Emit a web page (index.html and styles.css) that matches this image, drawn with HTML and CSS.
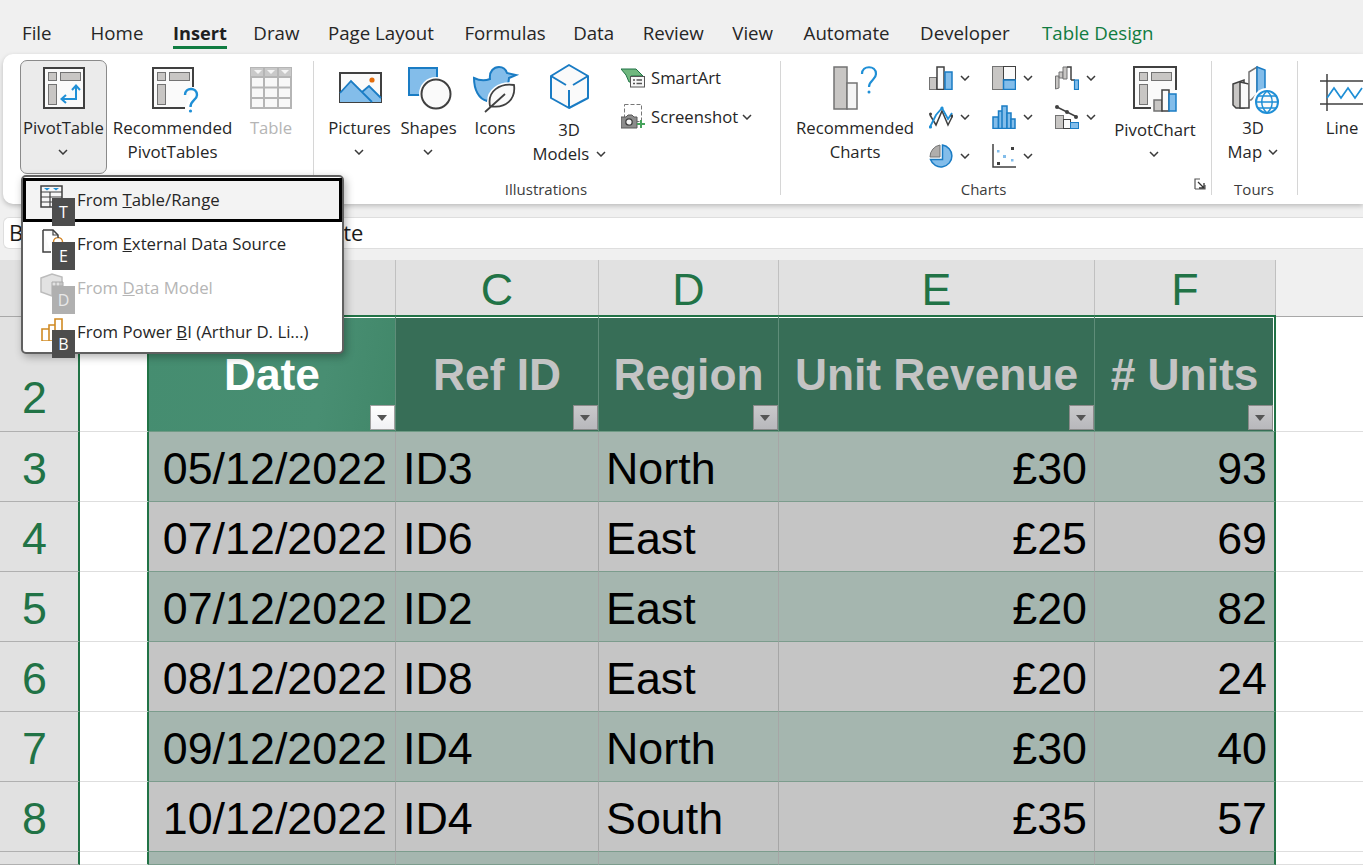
FILE: index.html
```html
<!DOCTYPE html>
<html lang="en">
<head>
<meta charset="utf-8">
<title>Excel Insert ribbon</title>
<link rel="stylesheet" href="styles.css">
</head>
<body>
<svg class="defs" width="0" height="0" aria-hidden="true">
  <symbol id="chev" viewBox="0 0 10 6"><polyline points="1,1 5,5 9,1" fill="none" stroke="#3a3a3a" stroke-width="1.500"/></symbol>
</svg>

<nav class="tabs">
  <span class="tab tab-file">File</span>
  <span class="tab">Home</span>
  <span class="tab tab-active">Insert</span>
  <span class="tab">Draw</span>
  <span class="tab">Page Layout</span>
  <span class="tab tab-formulas">Formulas</span>
  <span class="tab tab-data">Data</span>
  <span class="tab">Review</span>
  <span class="tab">View</span>
  <span class="tab tab-auto">Automate</span>
  <span class="tab tab-dev">Developer</span>
  <span class="tab tab-green">Table Design</span>
</nav>

<section class="ribbon">
  <div class="group g-tables">
    <div class="group-body">
      <div class="btn btn-pivot pressed">
        <svg class="ico" width="44" height="44" viewBox="0 0 44 44">
          <rect x="2" y="2" width="40" height="40" fill="#fafafa" stroke="#404040" stroke-width="2"/>
          <rect x="6.500" y="6.500" width="8" height="8" fill="#c8c6c4" stroke="#737373"/>
          <rect x="18.500" y="6.500" width="20" height="8" fill="#c8c6c4" stroke="#737373"/>
          <rect x="6.500" y="18.500" width="8" height="20" fill="#c8c6c4" stroke="#737373"/>
          <path d="M34 20 V33 H20 M30 24 L34 19.500 L38 24 M24 29 L19.500 33 L24 37" fill="none" stroke="#1f8fd6" stroke-width="2"/>
        </svg>
        <span class="lbl">PivotTable</span>
        <svg class="chev"><use href="#chev"/></svg>
      </div>
      <div class="btn btn-rec">
        <svg class="ico" width="48" height="48" viewBox="0 0 48 48">
          <path d="M36 42 H4 V2 H44 V21" fill="#fafafa" stroke="#404040" stroke-width="2"/>
          <rect x="8.500" y="6.500" width="8" height="8" fill="#c8c6c4" stroke="#737373"/>
          <rect x="20.500" y="6.500" width="20" height="8" fill="#c8c6c4" stroke="#737373"/>
          <rect x="8.500" y="18.500" width="8" height="20" fill="#c8c6c4" stroke="#737373"/>
          <path d="M36 29 C36 21 48 21 48 29 C48 34 41.500 34 41.500 41" fill="none" stroke="#1f8fd6" stroke-width="2.400"/>
          <circle cx="41.500" cy="45" r="1.600" fill="#1f8fd6"/>
        </svg>
        <span class="lbl">Recommended<br>PivotTables</span>
      </div>
      <div class="btn btn-table disabled">
        <svg class="ico" width="44" height="44" viewBox="0 0 44 44">
          <rect x="2" y="2" width="40" height="40" fill="#f8f8f8" stroke="#b5b5b5" stroke-width="2"/>
          <rect x="2" y="2" width="40" height="9" fill="#c9c9c9"/>
          <path d="M2 11 H42 M2 21.500 H42 M2 32 H42 M15 2 V42 M29 2 V42" stroke="#b5b5b5" stroke-width="2"/>
          <path d="M5 4 H13 L9 8 Z M18 4 H26 L22 8 Z M32 4 H40 L36 8 Z" fill="#f4f4f4"/>
        </svg>
        <span class="lbl">Table</span>
      </div>
    </div>
  </div>

  <div class="group g-illus">
    <div class="group-body">
      <div class="btn btn-pict">
        <svg class="ico" width="44" height="44" viewBox="0 0 44 44">
          <rect x="3" y="7" width="41" height="29" fill="#fafafa" stroke="#404040" stroke-width="2"/>
          <path d="M3 27 L14 15 L25 26 L32 20 L44 32 V36 H3 Z" fill="#83bdea"/>
          <path d="M3 27 L14 15 L35 36 M25 26 L32 20 L44 32" fill="none" stroke="#1a7cc4" stroke-width="1.800"/>
          <circle cx="35" cy="14" r="2.600" fill="#e46c0a"/>
        </svg>
        <span class="lbl">Pictures</span>
        <svg class="chev"><use href="#chev"/></svg>
      </div>
      <div class="btn btn-shape">
        <svg class="ico" width="44" height="44" viewBox="0 0 44 44">
          <rect x="2" y="2" width="28" height="27" fill="#83bdea" stroke="#1a7cc4" stroke-width="2"/>
          <circle cx="29" cy="28" r="17" fill="#fff"/>
          <circle cx="29" cy="28" r="14.500" fill="#fafafa" stroke="#404040" stroke-width="2"/>
        </svg>
        <span class="lbl">Shapes</span>
        <svg class="chev"><use href="#chev"/></svg>
      </div>
      <div class="btn btn-icons">
        <svg class="ico ico-over" width="44" height="44" viewBox="0 0 44 44">
          <path d="M1 12 C7 15 12 15 17 13 C16 5 21 1 26 1 C31 1 33 4 34 7 L43 9 L36 12 C36 16 35 19 33 22 L18 30 L14 35 C6 33 1 24 1 12 Z" fill="#83bdea" stroke="#1a7cc4" stroke-width="2"/>
          <path d="M41 19 C27 17 14 25 17 40 C33 43 43 33 41 19 Z" fill="#fafafa" stroke="#fff" stroke-width="5"/>
          <path d="M41 19 C27 17 14 25 17 40 C33 43 43 33 41 19 Z M12 46 L32 28" fill="#fafafa" stroke="#404040" stroke-width="1.800"/>
        </svg>
        <span class="lbl">Icons</span>
      </div>
      <div class="btn btn-3d">
        <svg class="ico" width="44" height="44" viewBox="0 0 44 44">
          <path d="M22 0 L41 11 V33 L22 43 L4 33 V11 Z" fill="#fafafa" stroke="#1a7cc4" stroke-width="2" stroke-linejoin="round"/>
          <path d="M4 11 L19 20 M41 11 L26 20 M22 25 V43" fill="none" stroke="#1a7cc4" stroke-width="2"/>
        </svg>
        <span class="lbl lbl-3d">3D<br>Models <svg class="chev chev-inline"><use href="#chev"/></svg></span>
      </div>
      <div class="small-col">
        <div class="small-btn">
          <svg width="24" height="20" viewBox="0 0 24 20">
            <path d="M0 1 H15 L22 8 H10 V14 H8 L5 7 Z" fill="#70b77e" stroke="#217346" stroke-width="1"/>
            <rect x="9.500" y="8.500" width="14" height="10.500" fill="#f7f7f7" stroke="#555"/>
            <path d="M12 12 H14 M15.500 12 H21 M12 15.500 H14 M15.500 15.500 H21" stroke="#555" stroke-width="1.400"/>
          </svg>
          <span class="lbl">SmartArt</span>
        </div>
        <div class="small-btn">
          <svg width="24" height="25" viewBox="0 0 24 25">
            <rect x="3.500" y="0.500" width="17" height="17" fill="none" stroke="#777" stroke-dasharray="4 2"/>
            <path d="M0 13 H5 L7 11 H11 L13 13 H16 V24 H0 Z" fill="#8c8c8c" stroke="#595959"/>
            <circle cx="8" cy="18" r="3.200" fill="#f7f7f7" stroke="#404040" stroke-width="1.300"/>
            <path d="M20 16 V24 M16 20 H24" stroke="#45a35b" stroke-width="2"/>
          </svg>
          <span class="lbl">Screenshot</span>
          <svg class="chev chev-tight"><use href="#chev"/></svg>
        </div>
      </div>
    </div>
    <div class="group-title">Illustrations</div>
  </div>

  <div class="group g-charts">
    <div class="group-body">
      <div class="btn btn-recc">
        <svg class="ico" width="44" height="44" viewBox="0 0 44 44">
          <rect x="1" y="1" width="13" height="42" fill="#c8c6c4" stroke="#737373" stroke-width="1.500"/>
          <rect x="14" y="17" width="10" height="26" fill="#f4f4f4" stroke="#737373" stroke-width="1.500"/>
          <path d="M29 8 C29 -1 43 -1 43 8 C43 14 36 14 36 21" fill="none" stroke="#1f8fd6" stroke-width="2.200"/>
          <circle cx="36" cy="26" r="1.500" fill="#1f8fd6"/>
        </svg>
        <span class="lbl">Recommended<br>Charts</span>
      </div>
      <div class="chart-grid">
        <div class="mini">
          <svg width="24" height="24" viewBox="0 0 24 24">
            <rect x="0.500" y="11.500" width="7" height="12" fill="#c8c6c4" stroke="#737373"/>
            <rect x="8" y="1" width="7" height="22.500" fill="#fafafa" stroke="#404040" stroke-width="1.500"/>
            <rect x="16" y="6" width="7" height="17.500" fill="#83bdea" stroke="#1a7cc4" stroke-width="1.500"/>
          </svg>
          <svg class="chev"><use href="#chev"/></svg>
        </div>
        <div class="mini">
          <svg width="24" height="24" viewBox="0 0 24 24">
            <rect x="0.500" y="0.500" width="11" height="23" fill="#c8c6c4" stroke="#737373"/>
            <rect x="11.500" y="0.500" width="12" height="13" fill="#fafafa" stroke="#404040"/>
            <rect x="11.500" y="14" width="12" height="9.500" fill="#83bdea" stroke="#1a7cc4" stroke-width="1.500"/>
          </svg>
          <svg class="chev"><use href="#chev"/></svg>
        </div>
        <div class="mini">
          <svg width="24" height="24" viewBox="0 0 24 24">
            <path d="M0.500 23 V10 H4 V22 Z M4 10 V6 H8 V12 H4 Z" fill="#c8c6c4" stroke="#737373"/>
            <path d="M8 1 H12 V13 H8 Z" fill="#c8c6c4" stroke="#737373"/>
            <path d="M12 1 H16 V14 M16 14 H20" fill="none" stroke="#404040" stroke-width="1.500"/>
            <rect x="19.500" y="14" width="4" height="9.500" fill="#83bdea" stroke="#1a7cc4" stroke-width="1.200"/>
          </svg>
          <svg class="chev"><use href="#chev"/></svg>
        </div>
        <div class="mini">
          <svg width="24" height="24" viewBox="0 0 24 24">
            <path d="M1 10 L7 20 L13 6 L19 20 L23 12" fill="none" stroke="#404040" stroke-width="1.500"/>
            <path d="M1 22 L7 10 L13 3 L19 14 L23 8" fill="none" stroke="#1f8fd6" stroke-width="1.800"/>
            <circle cx="1.500" cy="22" r="1.600" fill="#1f8fd6"/><circle cx="13" cy="3" r="1.600" fill="#1f8fd6"/>
            <circle cx="1.500" cy="9" r="1.500" fill="#404040"/><circle cx="23" cy="11" r="1.500" fill="#404040"/>
          </svg>
          <svg class="chev"><use href="#chev"/></svg>
        </div>
        <div class="mini">
          <svg width="24" height="24" viewBox="0 0 24 24">
            <rect x="1" y="12" width="5.500" height="11.500" fill="#83bdea" stroke="#1a7cc4" stroke-width="1.500"/>
            <rect x="6.500" y="6" width="5.500" height="17.500" fill="#83bdea" stroke="#1a7cc4" stroke-width="1.500"/>
            <rect x="10" y="1" width="5" height="22.500" fill="#83bdea" stroke="#1a7cc4" stroke-width="1.500"/>
            <rect x="15" y="8" width="4" height="15.500" fill="#83bdea" stroke="#1a7cc4" stroke-width="1.500"/>
            <rect x="19" y="14" width="4" height="9.500" fill="#83bdea" stroke="#1a7cc4" stroke-width="1.500"/>
          </svg>
          <svg class="chev"><use href="#chev"/></svg>
        </div>
        <div class="mini">
          <svg width="24" height="24" viewBox="0 0 24 24">
            <rect x="0.500" y="10.500" width="8" height="13" fill="#c8c6c4" stroke="#737373"/>
            <rect x="8.500" y="14.500" width="7" height="9" fill="#fafafa" stroke="#404040"/>
            <rect x="15.500" y="17.500" width="8" height="6" fill="#83bdea" stroke="#1a7cc4"/>
            <path d="M2 2 L12 7 L22 12" fill="none" stroke="#404040" stroke-width="1.500"/>
            <circle cx="2" cy="2" r="2" fill="#404040"/><circle cx="12" cy="7" r="2" fill="#404040"/><circle cx="21" cy="12" r="2" fill="#404040"/>
          </svg>
          <svg class="chev"><use href="#chev"/></svg>
        </div>
        <div class="mini">
          <svg width="24" height="24" viewBox="0 0 24 24">
            <path d="M11 13 V1 A12 12 0 0 0 1 13 Z" fill="#b0aeac" stroke="#737373"/>
            <path d="M13.500 1 A11 11 0 1 1 1.500 15.500 H13.500 Z" fill="#83bdea" stroke="#1a7cc4" stroke-width="1.500"/>
          </svg>
          <svg class="chev"><use href="#chev"/></svg>
        </div>
        <div class="mini">
          <svg width="24" height="24" viewBox="0 0 24 24">
            <path d="M1 0 V23 H24" fill="none" stroke="#404040" stroke-width="1.500"/>
            <rect x="19" y="3" width="3" height="3" fill="#404040"/>
            <rect x="5" y="6" width="2.500" height="2.500" fill="#83bdea"/>
            <rect x="11" y="11" width="3" height="3" fill="#83bdea"/>
            <rect x="19" y="15" width="2.500" height="2.500" fill="#83bdea"/>
            <rect x="5" y="18" width="3" height="3" fill="#404040"/>
          </svg>
          <svg class="chev"><use href="#chev"/></svg>
        </div>
      </div>
      <div class="btn btn-pchart">
        <svg class="ico" width="44" height="46" viewBox="0 0 44 46">
          <path d="M18 42 H1 V1 H43 V24" fill="#fafafa" stroke="#404040" stroke-width="2"/>
          <rect x="6.500" y="6.500" width="8" height="8" fill="#c8c6c4" stroke="#737373"/>
          <rect x="18.500" y="6.500" width="20" height="8" fill="#c8c6c4" stroke="#737373"/>
          <rect x="6.500" y="18.500" width="8" height="20" fill="#c8c6c4" stroke="#737373"/>
          <rect x="21" y="34" width="8" height="11" fill="#c8c6c4" stroke="#737373" stroke-width="1.500"/>
          <rect x="29" y="24" width="7" height="21" fill="#fafafa" stroke="#404040" stroke-width="1.500"/>
          <rect x="36" y="28" width="7" height="17" fill="#83bdea" stroke="#1a7cc4" stroke-width="1.500"/>
        </svg>
        <span class="lbl">PivotChart</span>
        <svg class="chev"><use href="#chev"/></svg>
      </div>
    </div>
    <div class="group-title">Charts</div>
    <svg class="launcher" width="12" height="12" viewBox="0 0 12 12">
      <path d="M1 11 V1 H6 M1 11 H11 V7" fill="none" stroke="#555" stroke-width="1.200"/>
      <path d="M4 4 L10 10 M10 5 V10 H5" fill="none" stroke="#333" stroke-width="1.300"/>
    </svg>
  </div>

  <div class="group g-tours">
    <div class="group-body">
      <div class="btn btn-map">
        <svg class="ico" width="48" height="48" viewBox="0 0 48 48">
          <path d="M1 18 L12 14 V42 H4 L1 39 Z" fill="#c8c6c4" stroke="#404040" stroke-width="1.500"/>
          <path d="M8 16 L17 18 V42 H8 Z" fill="#fafafa" stroke="#404040" stroke-width="1.500"/>
          <path d="M17 6 L25 1 V28 L19 34 L17 34 Z" fill="#fafafa" stroke="#737373" stroke-width="1.500"/>
          <path d="M25 1 L33 4 V24 L25 28 Z" fill="#83bdea" stroke="#1a7cc4" stroke-width="1.500"/>
          <circle cx="35" cy="36" r="14" fill="#fff"/>
          <circle cx="35" cy="36" r="11" fill="#fafafa" stroke="#1f8fd6" stroke-width="2"/>
          <path d="M24 36 H46 M26 30 H44 M26 42 H44 M35 25 C28 31 28 41 35 47 C42 41 42 31 35 25" fill="none" stroke="#1f8fd6" stroke-width="1.500"/>
        </svg>
        <span class="lbl">3D<br>Map <svg class="chev chev-inline"><use href="#chev"/></svg></span>
      </div>
    </div>
    <div class="group-title">Tours</div>
  </div>

  <div class="group g-spark">
    <div class="group-body">
      <div class="btn btn-line">
        <svg class="ico" width="44" height="44" viewBox="0 0 44 44">
          <path d="M0 11 H44 M0 34 H44 M7 4 V41" stroke="#404040" stroke-width="1.500" fill="none"/>
          <path d="M7 28 L14 18 L21 28 L28 18 L35 28 L42 18" stroke="#1f8fd6" stroke-width="1.700" fill="none"/>
        </svg>
        <span class="lbl">Line</span>
      </div>
    </div>
  </div>
</section>

<div class="formula-bar">
  <span class="name-box">B2</span>
  <span class="formula">Date</span>
</div>

<main class="sheet">
  <div class="corner"></div><div class="col-head col-a"></div><div class="col-head"></div><div class="col-head">C</div><div class="col-head">D</div><div class="col-head">E</div><div class="col-head">F</div><div class="col-rest"></div>

  <div class="row-head row-head-tall">2</div>
  <div class="blank tall"></div>
  <div class="th th-active">Date<i class="filter filter-active"></i></div>
  <div class="th">Ref ID<i class="filter"></i></div>
  <div class="th">Region<i class="filter"></i></div>
  <div class="th">Unit Revenue<i class="filter"></i></div>
  <div class="th th-last"># Units<i class="filter"></i></div>
  <div class="free tall"></div>

  <div class="row-head">3</div><div class="blank"></div>
  <div class="td a num">05/12/2022</div><div class="td a">ID3</div><div class="td a">North</div><div class="td a num">£30</div><div class="td a num last">93</div><div class="free"></div>

  <div class="row-head">4</div><div class="blank"></div>
  <div class="td b num">07/12/2022</div><div class="td b">ID6</div><div class="td b">East</div><div class="td b num">£25</div><div class="td b num last">69</div><div class="free"></div>

  <div class="row-head">5</div><div class="blank"></div>
  <div class="td a num">07/12/2022</div><div class="td a">ID2</div><div class="td a">East</div><div class="td a num">£20</div><div class="td a num last">82</div><div class="free"></div>

  <div class="row-head">6</div><div class="blank"></div>
  <div class="td b num">08/12/2022</div><div class="td b">ID8</div><div class="td b">East</div><div class="td b num">£20</div><div class="td b num last">24</div><div class="free"></div>

  <div class="row-head">7</div><div class="blank"></div>
  <div class="td a num">09/12/2022</div><div class="td a">ID4</div><div class="td a">North</div><div class="td a num">£30</div><div class="td a num last">40</div><div class="free"></div>

  <div class="row-head">8</div><div class="blank"></div>
  <div class="td b num">10/12/2022</div><div class="td b">ID4</div><div class="td b">South</div><div class="td b num">£35</div><div class="td b num last">57</div><div class="free"></div>

  <div class="row-head"></div><div class="blank"></div>
  <div class="td a"></div><div class="td a"></div><div class="td a"></div><div class="td a"></div><div class="td a last"></div><div class="free"></div>
</main>

<div class="menu">
  <div class="menu-item selected">
    <svg class="menu-ico" width="24" height="24" viewBox="0 0 24 24">
      <rect x="1" y="1" width="21" height="21" fill="#f7f7f7" stroke="#404040" stroke-width="1.500"/>
      <path d="M1 7 H22 M1 12 H22 M1 17 H22 M10 7 V22" stroke="#404040" stroke-width="1.200"/>
      <path d="M4 3 H10 L7 5.500 Z M13 3 H19 L16 5.500 Z" fill="#1f8fd6"/>
    </svg>
    <span>From <u>T</u>able/Range</span><b class="keytip">T</b>
  </div>
  <div class="menu-item">
    <svg class="menu-ico" width="24" height="24" viewBox="0 0 24 24">
      <circle cx="18" cy="13" r="4.500" fill="none" stroke="#d4882a" stroke-width="1.500"/>
      <path d="M3 1 H13 L18 6 V9 M11 23 H3 V1" fill="#fafafa" stroke="#404040" stroke-width="1.500"/>
      <path d="M13 1 V6 H18" fill="none" stroke="#404040" stroke-width="1.200"/>
    </svg>
    <span>From <u>E</u>xternal Data Source</span><b class="keytip">E</b>
  </div>
  <div class="menu-item off">
    <svg class="menu-ico" width="24" height="24" viewBox="0 0 24 24">
      <path d="M1 5 L12 1 L22 4 V19 L12 23 L1 19 Z" fill="#d9d9d9" stroke="#a6a6a6" stroke-width="1.500"/>
      <path d="M12 9 H23 V22 H12 Z M16 9 V22 M20 9 V22 M12 13 H23 M12 17 H23" fill="none" stroke="#8c8c8c"/>
    </svg>
    <span>From <u>D</u>ata Model</span><b class="keytip">D</b>
  </div>
  <div class="menu-item">
    <svg class="menu-ico" width="24" height="24" viewBox="0 0 24 24">
      <path d="M2 12 H9 V24 H2 Z M9 8 H15 V24 H9 Z M15 2 H22 V24 H15 Z" fill="none" stroke="#d08a23" stroke-width="1.600"/>
    </svg>
    <span>From Power <u>B</u>I (Arthur D. Li...)</span><b class="keytip">B</b>
  </div>
</div>
</body>
</html>
```
FILE: styles.css
```css
* { box-sizing: border-box; }
html, body { margin: 0; padding: 0; }
body {
  position: relative;
  width: 1363px;
  height: 865px;
  overflow: hidden;
  background: #f0f0f0;
  font-family: "Open Sans", "Noto Sans", sans-serif;
  color: #262626;
}
.defs { position: absolute; }

/* Tabs */
.tabs {
  display: flex;
  height: 54px;
  padding: 19px 0 0 22px;
  gap: 28.500px;
  font-size: 18.700px;
  line-height: 28px;
  white-space: nowrap;
}
.tab { height: 30px; }
.tab-file { margin-right: 10.500px; }
.tab-active { font-weight: 700; font-size: 18.200px; border-bottom: 3px solid #107c41; height: 30px; color: #1f1f1f; margin-left: 1px; margin-right: -2px; }
.tab-green { color: #107c41; margin-left: 4px; }
.tab-formulas { margin-left: 2px; }
.tab-data { margin-left: -1px; }
.tab-auto { margin-left: 2px; }
.tab-dev { margin-left: 2px; }

/* Ribbon */
.ribbon {
  display: flex;
  height: 150px;
  margin-left: 3px;
  background: #fff;
  border-radius: 10px 0 0 10px;
  box-shadow: 0 2px 5px rgba(0,0,0,.22);
  overflow: hidden;
  font-size: 16.700px;
  line-height: 24px;
}
.group {
  position: relative;
  margin: 7px 0 9px;
  border-right: 1px solid #d6d6d6;
  flex: none;
  display: flex;
  flex-direction: column;
}
.g-tables { width: 311px; padding-left: 17px; }
.g-illus { width: 467px; padding-left: 15px; }
.g-charts { width: 431px; padding-left: 15px; }
.g-tours { width: 86px; padding-left: 16px; }
.g-spark { border-right: 0; flex: 1; padding-left: 22px; }

.group-body { display: flex; align-items: flex-start; height: 118px; padding-top: 5px; flex: none; }
.group-title { text-align: center; font-size: 15px; line-height: 20px; color: #3c3c3c; height: 20px; }
.g-illus .group-title { padding-right: 17px; }
.g-charts .group-title { padding-right: 40px; }
.g-tours .group-title { padding-right: 17px; }

.btn { display: flex; flex-direction: column; align-items: center; flex: none; text-align: center; white-space: nowrap; }
.ico { display: block; flex: none; overflow: visible; margin-bottom: 6px; }
.lbl { display: block; }
.chev { width: 10px; height: 6px; margin: 9px 2px 0 0; flex: none; }
.chev-inline { margin: 0 0 3px 2px; display: inline-block; vertical-align: middle; }
.chev-tight { margin: 0 0 0 -2px; }
.disabled { color: #b5b5b5; }

.btn-pivot { width: 87px; height: 114px; margin-top: -6px; padding-top: 5px; border: 1px solid #8a8a8a; border-radius: 7px; background: #ebebeb; }
.btn-rec { width: 119px; margin-left: 6px; font-size: 16.900px; }
.btn-rec .ico { margin-bottom: 2px; }
.btn-table { width: 42px; margin-left: 18px; }

.btn-pict { width: 61px; }
.btn-pict .ico { margin-left: -1px; }
.btn-shape { width: 57px; margin-left: 10px; }
.btn-icons { width: 42px; margin-left: 17px; }
.btn-3d { width: 76px; margin-left: 15px; }
.btn-3d .ico { margin-bottom: 9px; margin-top: -1px; }

.small-col { display: flex; flex-direction: column; margin-left: 14px; gap: 14px; margin-top: -1px; }
.small-btn { display: flex; align-items: center; gap: 6px; height: 25px; white-space: nowrap; }

.btn-recc { width: 120px; margin-left: -1px; margin-right: 1px; }
.chart-grid { display: grid; grid-template-columns: repeat(3, 63px); grid-auto-rows: 39px; margin-left: 13px; }
.mini { display: flex; align-items: center; gap: 7px; height: 24px; }
.mini .chev { margin: 0; }
.btn-pchart { width: 84px; margin-left: -5px; }
.btn-pchart .ico { margin-bottom: 6px; }
.launcher { position: absolute; right: 5px; bottom: 5px; }
.btn-map { width: 50px; }
.btn-map .ico { margin: 0 0 2px 5px; }
.btn-line { width: 44px; }
.g-spark .ico { margin-top: 4px; margin-bottom: 2px; }

/* Formula bar */
.formula-bar {
  display: flex;
  align-items: center;
  height: 32px;
  margin: 13px 0 0 3px;
  padding-bottom: 2px;
  background: #fff;
  border: 1px solid #dedede;
  border-right: 0;
  border-radius: 6px 0 0 6px;
  font-size: 22px;
  color: #1a1a1a;
}
.name-box { margin-left: 5px; width: 309px; }
.formula { margin-left: -3px; }

/* Sheet */
.sheet {
  display: grid;
  grid-template-columns: 80px 69px 247px 203px 180px 316px 181px 87px;
  grid-template-rows: 57px 115px repeat(6, 70px) 13px;
  margin-top: 11px;
  font-family: "Liberation Sans", Arial, sans-serif;
  font-size: 44.800px;
  color: #000;
}
.corner, .col-head { background: #e1e1e1; border-bottom: 1px solid #a8a8a8; border-right: 1px solid #c0c0c0; }
.col-head { display: flex; align-items: center; justify-content: center; padding-top: 3px; color: #217346; }
.corner { border-right: 0; }
.col-a { border-right: 0; }
.col-rest { background: #f0f0f0; border-bottom: 1px solid #a8a8a8; }
.row-head {
  display: flex; align-items: center; justify-content: center;
  padding: 3px 9px 0 0;
  background: #e1e1e1;
  border-right: 2px solid #217346;
  border-bottom: 1px solid #b0b0b0;
  color: #217346;
}
.row-head-tall { align-items: flex-end; padding-bottom: 8px; }
.blank { background: #fff; border-right: 2px solid #217346; border-bottom: 1px solid #dedede; }
.free { background: #fff; border-bottom: 1px solid #dedede; }
.th {
  position: relative;
  display: flex; align-items: center; justify-content: center;
  margin-top: -2px;
  padding-top: 2px;
  background: #376e57;
  color: #c4c4c4;
  font-size: 44.300px;
  font-weight: 700;
  border-top: 2px solid #217346;
  border-right: 1px solid #5f8d79;
  border-bottom: 1px solid #6f9a85;
  box-shadow: inset 0 1px 0 #fff;
  white-space: nowrap;
}
.th-active { background: linear-gradient(100deg, #458d70, #488e72 70%, #418769); color: #fff; }
.th-last { border-right: 2px solid #217346; box-shadow: inset -1px 0 0 #fff, inset 0 1px 0 #fff; }
.filter {
  position: absolute; right: 0; bottom: 1px;
  width: 25px; height: 25px;
  background: linear-gradient(#c9c9cb, #b8b8bc);
  border: 1px solid #8a8a8a;
}
.filter::after {
  content: ""; position: absolute; left: 6px; top: 9px;
  border: 5px solid transparent; border-top: 6px solid #555; border-bottom: 0;
}
.filter-active { background: linear-gradient(#fff, #f1f1f4); border-color: #a0a0a0; }
.th-last .filter { right: 1px; }
.td {
  display: flex; align-items: center;
  padding: 3px 7px 0;
  border-right: 1px solid #a6a6a6;
  border-bottom: 1px solid #7c9c8d;
  white-space: nowrap;
}
.blank + .td { padding-right: 8px; }
.a { background: #a5b6af; }
.b { background: #c5c5c5; }
.num { justify-content: flex-end; }
.last { border-right: 2px solid #217346; }

/* Menu */
.menu {
  position: absolute;
  left: 21px; top: 175px;
  width: 323px; height: 179px;
  padding: 1px 0;
  background: #fff;
  border: 2px solid #606060;
  border-radius: 5px;
  box-shadow: 2px 3px 8px rgba(0,0,0,.3);
  font-size: 16.800px;
  color: #262626;
}
.menu-item {
  position: relative;
  display: flex; align-items: center;
  height: 44px;
  padding-left: 17px;
  white-space: nowrap;
}
.menu-item span { margin-top: -2px; }
.menu-ico { flex: none; margin-right: 13px; position: relative; top: -3px; }
.selected { background: #f3f3f3; border: 3px solid #000; padding-left: 14px; }
.off { color: #b5b5b5; }
.off .menu-ico { opacity: .75; }
.keytip {
  position: absolute;
  left: 29px; top: 20px;
  width: 23px; height: 28px;
  display: flex; align-items: center; justify-content: center;
  background: #4d4d4d;
  color: #fff;
  font-size: 16px;
  font-weight: 400;
}
.selected .keytip { left: 26px; top: 17px; }
.off .keytip { background: #b0b0b0; color: #e8e8e8; }
```
